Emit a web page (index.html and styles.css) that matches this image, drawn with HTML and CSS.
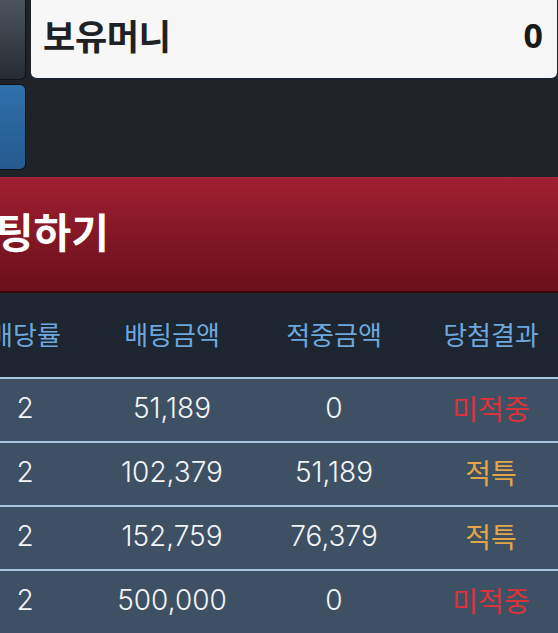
FILE: index.html
```html
<!DOCTYPE html>
<html lang="ko">
<head>
<meta charset="utf-8">
<title>배팅</title>
<link rel="stylesheet" href="styles.css">
</head>
<body>
<div class="page">
  <div class="top">
    <div class="side">
      <div class="btn btn-dark"></div>
      <div class="btn btn-blue"></div>
    </div>
    <div class="money">
      <span class="money-label">보유머니</span>
      <span class="money-value">0</span>
    </div>
  </div>
  <div class="bet-bar"><span class="bet-text">배팅하기</span></div>
  <div class="table">
    <div class="row head">
      <div class="cell">배당률</div>
      <div class="cell">배팅금액</div>
      <div class="cell">적중금액</div>
      <div class="cell">당첨결과</div>
    </div>
    <div class="row">
      <div class="cell">2</div>
      <div class="cell">51,189</div>
      <div class="cell">0</div>
      <div class="cell res lose">미적중</div>
    </div>
    <div class="row">
      <div class="cell">2</div>
      <div class="cell">102,379</div>
      <div class="cell">51,189</div>
      <div class="cell res special">적특</div>
    </div>
    <div class="row">
      <div class="cell">2</div>
      <div class="cell">152,759</div>
      <div class="cell">76,379</div>
      <div class="cell res special">적특</div>
    </div>
    <div class="row">
      <div class="cell">2</div>
      <div class="cell">500,000</div>
      <div class="cell">0</div>
      <div class="cell res lose">미적중</div>
    </div>
  </div>
</div>
</body>
</html>
```
FILE: styles.css
```css
html, body {
  margin: 0;
  padding: 0;
}
body {
  background: #1f2328;
  width: 558px;
  height: 633px;
  overflow: hidden;
  font-family: "Noto Sans CJK KR", "Noto Sans", sans-serif;
}
.page {
  width: 558px;
  overflow: hidden;
}
.top {
  display: grid;
  grid-template-columns: 26px 1fr;
  column-gap: 5px;
  padding-right: 1px;
  height: 170px;
}
.side {
  display: flex;
  flex-direction: column;
  gap: 4px;
}
.btn {
  border: 1px solid #0f1114;
  border-left: none;
  box-sizing: border-box;
}
.btn-dark {
  height: 80px;
  border-top: none;
  border-radius: 0 0 6px 0;
  background: linear-gradient(#4b545d, #262c33);
}
.btn-blue {
  height: 86px;
  border-radius: 0 6px 6px 0;
  background: linear-gradient(#2f70ab, #245a8f);
}
.money {
  height: 79px;
  box-sizing: border-box;
  background: #f7f7f8;
  border-bottom: 1px solid #17203a;
  border-radius: 0 0 6px 6px;
  display: flex;
  align-items: center;
  justify-content: space-between;
  padding: 0 14px 9px 12px;
}
.money-label {
  font-size: 35px;
  font-weight: 700;
  color: #202124;
  letter-spacing: -0.3px;
}
.money-value {
  font-family: "Noto Sans", "Noto Sans CJK KR", sans-serif;
  font-size: 34px;
  font-weight: 700;
  color: #1a1a1a;
}
.bet-bar {
  margin-top: 7px;
  height: 113px;
  border-top: 1px solid #a52434;
  border-bottom: 2px solid #3a0508;
  background: linear-gradient(#a01f30, #690f1b);
  display: flex;
  align-items: center;
}
.bet-text {
  margin-left: -42px;
  margin-top: -10px;
  color: #ffffff;
  font-size: 41px;
  font-weight: 700;
}
.table {
  margin-left: -50px;
  width: 608px;
}
.row {
  display: grid;
  grid-template-columns: 150px 144px 180px 134px;
  align-items: center;
  height: 62px;
  border-top: 2px solid #a6c7e1;
  background: #3e5164;
  color: #f3f5f7;
  font-family: "Inter", "Noto Sans", "Noto Sans CJK KR", sans-serif;
  font-weight: 300;
  font-size: 28px;
}
.row.head {
  height: 84px;
  border-top: none;
  background: #1c2530;
  color: #6ca8de;
  font-family: "Noto Sans CJK KR", "Noto Sans", sans-serif;
  font-weight: 400;
  font-size: 26px;
}
.cell {
  text-align: center;
  white-space: nowrap;
  padding-bottom: 4px;
}
.res {
  font-family: "Noto Sans CJK KR", "Noto Sans", sans-serif;
  font-weight: 400;
  font-size: 28px;
}
.lose {
  color: #d9333a;
}
.special {
  color: #e3a548;
}
```
